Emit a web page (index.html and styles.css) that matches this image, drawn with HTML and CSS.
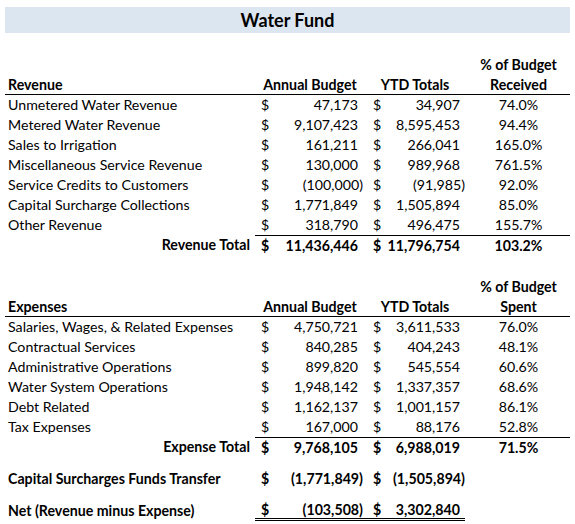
FILE: index.html
```html
<!DOCTYPE html>
<html>
<head>
<meta charset="utf-8">
<link rel="stylesheet" href="styles.css">
</head>
<body>
<div class="sheet">
  <div class="title">Water Fund</div>

  <div class="row head1 gap-title">
    <div></div><div></div><div></div><div class="pct b">% of Budget</div>
  </div>
  <div class="row head2">
    <div class="label b">Revenue</div><div class="ctr b">Annual Budget</div><div class="ctr b">YTD Totals</div><div class="pct b">Received</div>
  </div>

  <div class="row"><div class="label">Unmetered Water Revenue</div><div class="amt a1"><span>$</span><span class="n">47,173</span></div><div class="amt a2"><span>$</span><span class="n">34,907</span></div><div class="pct">74.0%</div></div>
  <div class="row"><div class="label">Metered Water Revenue</div><div class="amt a1"><span>$</span><span class="n">9,107,423</span></div><div class="amt a2"><span>$</span><span class="n">8,595,453</span></div><div class="pct">94.4%</div></div>
  <div class="row"><div class="label">Sales to Irrigation</div><div class="amt a1"><span>$</span><span class="n">161,211</span></div><div class="amt a2"><span>$</span><span class="n">266,041</span></div><div class="pct">165.0%</div></div>
  <div class="row"><div class="label">Miscellaneous Service Revenue</div><div class="amt a1"><span>$</span><span class="n">130,000</span></div><div class="amt a2"><span>$</span><span class="n">989,968</span></div><div class="pct">761.5%</div></div>
  <div class="row"><div class="label">Service Credits to Customers</div><div class="amt a1"><span>$</span><span class="n neg">(100,000)</span></div><div class="amt a2"><span>$</span><span class="n neg">(91,985)</span></div><div class="pct">92.0%</div></div>
  <div class="row"><div class="label">Capital Surcharge Collections</div><div class="amt a1"><span>$</span><span class="n">1,771,849</span></div><div class="amt a2"><span>$</span><span class="n">1,505,894</span></div><div class="pct">85.0%</div></div>
  <div class="row"><div class="label">Other Revenue</div><div class="amt a1"><span>$</span><span class="n">318,790</span></div><div class="amt a2"><span>$</span><span class="n">496,475</span></div><div class="pct">155.7%</div></div>
  <div class="row total b">
    <div class="label right">Revenue Total</div><div class="amt a1 tl"><span>$</span><span class="n">11,436,446</span></div><div class="amt a2 tl"><span>$</span><span class="n">11,796,754</span></div><div class="pct tl">103.2%</div>
  </div>

  <div class="row head1 gap-section">
    <div></div><div></div><div></div><div class="pct b">% of Budget</div>
  </div>
  <div class="row head2">
    <div class="label b">Expenses</div><div class="ctr b">Annual Budget</div><div class="ctr b">YTD Totals</div><div class="pct b">Spent</div>
  </div>

  <div class="row"><div class="label">Salaries, Wages, &amp; Related Expenses</div><div class="amt a1"><span>$</span><span class="n">4,750,721</span></div><div class="amt a2"><span>$</span><span class="n">3,611,533</span></div><div class="pct">76.0%</div></div>
  <div class="row"><div class="label">Contractual Services</div><div class="amt a1"><span>$</span><span class="n">840,285</span></div><div class="amt a2"><span>$</span><span class="n">404,243</span></div><div class="pct">48.1%</div></div>
  <div class="row"><div class="label">Administrative Operations</div><div class="amt a1"><span>$</span><span class="n">899,820</span></div><div class="amt a2"><span>$</span><span class="n">545,554</span></div><div class="pct">60.6%</div></div>
  <div class="row"><div class="label">Water System Operations</div><div class="amt a1"><span>$</span><span class="n">1,948,142</span></div><div class="amt a2"><span>$</span><span class="n">1,337,357</span></div><div class="pct">68.6%</div></div>
  <div class="row"><div class="label">Debt Related</div><div class="amt a1"><span>$</span><span class="n">1,162,137</span></div><div class="amt a2"><span>$</span><span class="n">1,001,157</span></div><div class="pct">86.1%</div></div>
  <div class="row"><div class="label">Tax Expenses</div><div class="amt a1"><span>$</span><span class="n">167,000</span></div><div class="amt a2"><span>$</span><span class="n">88,176</span></div><div class="pct">52.8%</div></div>
  <div class="row total b">
    <div class="label right">Expense Total</div><div class="amt a1 tl"><span>$</span><span class="n">9,768,105</span></div><div class="amt a2 tl"><span>$</span><span class="n">6,988,019</span></div><div class="pct tl">71.5%</div>
  </div>

  <div class="row b gap-transfer">
    <div class="label">Capital Surcharges Funds Transfer</div><div class="amt a1"><span>$</span><span class="n neg">(1,771,849)</span></div><div class="amt a2"><span>$</span><span class="n neg">(1,505,894)</span></div><div></div>
  </div>
  <div class="row b gap-net net">
    <div class="label">Net (Revenue minus Expense)</div><div class="amt a1 dbl"><span>$</span><span class="n neg">(103,508)</span></div><div class="amt a2 dbl"><span>$</span><span class="n">3,302,840</span></div><div></div>
  </div>
</div>
</body>
</html>
```

FILE: styles.css
```css
html, body {
  margin: 0;
  padding: 0;
  background: #ffffff;
}

body {
  font-family: Lato, "Liberation Sans", sans-serif;
  font-size: 14.2px;
  color: #000000;
}

.sheet {
  width: 565px;
  margin-left: 5px;
  padding-top: 7px;
}

.title {
  height: 26px;
  line-height: 26px;
  background: #dce6f1;
  text-align: center;
  font-weight: bold;
  font-size: 18px;
}

.row {
  display: grid;
  grid-template-columns: 250px 110px 100px 105px;
  height: 20px;
  line-height: 20px;
  white-space: nowrap;
}

.b { font-weight: bold; }

.gap-title { margin-top: 22px; }
.gap-section { margin-top: 22px; }
.gap-transfer { margin-top: 12px; }
.gap-net { margin-top: 12px; }

.head2 {
  box-sizing: border-box;
  border-bottom: 1px solid #000;
  height: 20px;
  line-height: 19px;
}

.label { padding-left: 3px; }
.label.right { text-align: right; padding-right: 5px; }

.ctr { text-align: center; }
.pct { text-align: center; padding-left: 2px; }

.amt {
  display: flex;
  justify-content: space-between;
}
.a1 { padding: 0 7px 0 6px; }
.a2 { padding: 0 5px 0 8px; }
.n.neg { margin-right: -5px; }

.tl {
  box-sizing: border-box;
  border-top: 1px solid #000;
  line-height: 19px;
}

.net { line-height: 19px; }

.dbl {
  box-sizing: border-box;
  height: 20px;
  border-bottom: 3px double #000;
  line-height: 17px;
}
```
